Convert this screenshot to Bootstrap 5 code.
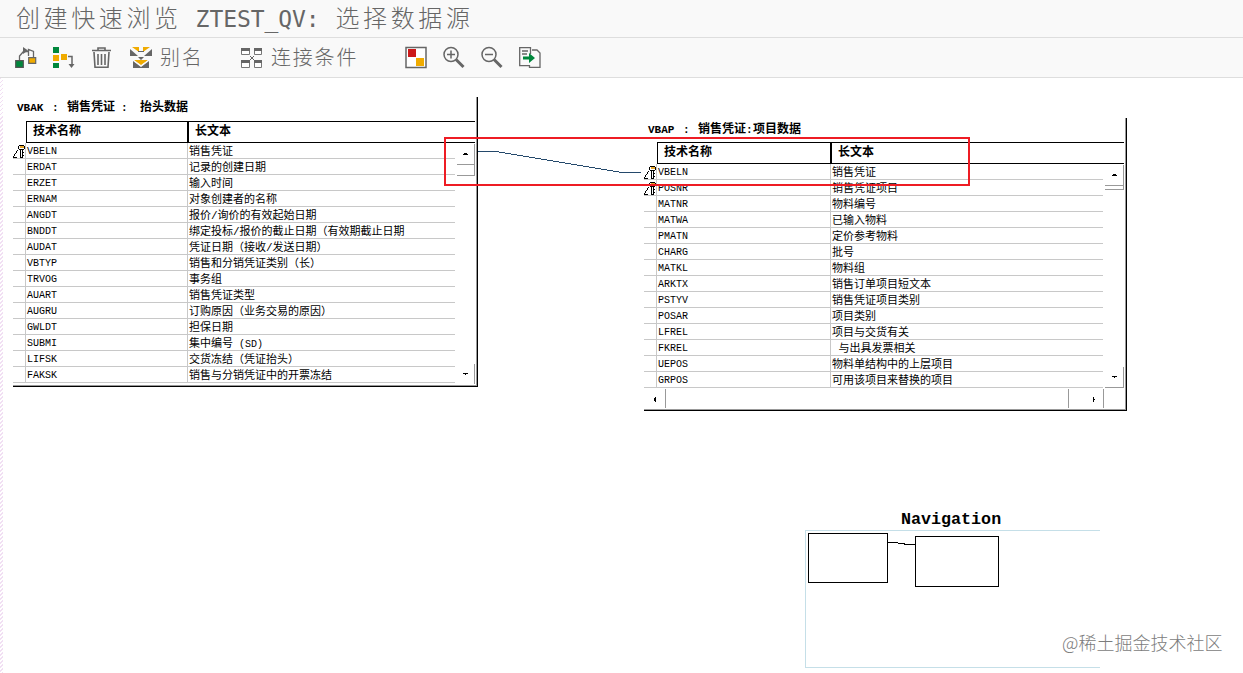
<!DOCTYPE html>
<html lang="zh-CN">
<head>
<meta charset="utf-8">
<title>创建快速浏览 ZTEST_QV</title>
<link href="https://cdn.jsdelivr.net/npm/bootstrap@5.3.0/dist/css/bootstrap.min.css" rel="stylesheet">
<script src="https://cdn.jsdelivr.net/npm/bootstrap@5.3.0/dist/js/bootstrap.bundle.min.js"></script>
<style>
body{height:673px;overflow:hidden;background:#fff;color:#000;font-family:"Liberation Mono","Noto Sans CJK SC",monospace}
.titlebar{height:38px;background:#f9f9f9;border-bottom:1px solid #dedede;color:#666;padding-left:16px;font:300 24px/34px "Noto Sans CJK SC",sans-serif;letter-spacing:3.6px;white-space:pre}
.titlebar .code{font:23px/34px "DejaVu Sans Mono",monospace;letter-spacing:-.08px;margin:0 16px 0 14px}
.tools{height:40px;background:#f9f9f9;border-bottom:1px solid #dedede;color:#666;font:300 20px/36px "Noto Sans CJK SC",sans-serif;letter-spacing:1.8px;padding-left:14px}
.tools span{height:38px}
.tools svg{width:24px;height:24px;display:block;flex:none}
.board{height:595px}
.board::before{content:"";position:absolute;left:0;top:0;width:3px;height:100%;background:repeating-linear-gradient(135deg,#f1dff3 0 1.4px,#fff 1.4px 2.83px)}
.node{position:absolute;border-right:1px solid #000;border-bottom:1px solid #000;box-shadow:inset -1px -1px #999}
.node-vbak{left:13px;top:19px;width:465px;height:290px}
.node-vbap{left:644px;top:40px;width:483px;height:293px}
.cap{height:24px;padding-top:2px;font-size:11px;font-weight:700;line-height:18px;white-space:pre;padding-left:4px}
.node-vbap .cap{padding-top:3px}
.cap span{display:inline-block}
.head{height:22px;margin:0 2px 0 13px;border:1px solid #000;border-right:0;font-size:12px;font-weight:700;line-height:21px}
.head div{padding-left:6px;height:20px}
.head div+div{border-left:2px solid #000}
.ln{height:16px;border-bottom:1px solid #c8c8c8;font-size:11px;line-height:18px;white-space:pre}
.ln b{width:13px;border-right:1px solid #c8c8c8}
.ln i{font-style:normal;font-size:10px;padding-left:1px;border-right:1px solid #c8c8c8}
.ln span{padding-left:1px}
.node-vbak .rows{width:442px}
.node-vbap .rows{width:459px}
.node-vbak i{width:162px}.node-vbap i{width:174px}
.node-vbak .head div:first-child{width:160px}.node-vbap .head div:first-child{width:172px}
.over{position:absolute;left:0;top:0}
.mark-box{position:absolute;left:444px;top:59px;width:526px;height:49px;border:2px solid #ee1c24}
.navi{position:absolute;left:805px;top:431px;width:295px}
.navi h6{font:700 16.7px/21px "Liberation Mono",monospace;margin:0;padding-left:96px}
.navi svg{display:block}
.water{position:absolute;left:1062px;top:551px;font:300 18px/26px "Noto Sans CJK SC",sans-serif;color:#7c7c7c;white-space:nowrap}
</style>
</head>
<body>
<svg width="0" height="0" class="position-absolute">
<defs>
<g id="key" shape-rendering="crispEdges"><path d="M6 0h5v1h1v3h-1v1h-1v8H7V5H6V4H5V1h1z"/><path d="M6 1h5v3H6zM8 5h1v7H8z" fill="#fff"/><path d="M7 1h4v2H7z" fill="#e9a72b"/><path d="M4 5h1v1H4zM3 6h1v2H3zM2 8h1v1H2zM1 9h1v2H1zM0 11h1v2H0zM1 12h3v1H1zM10 7h1v1h-1zM10 10h1v1h-1z"/></g>
</defs>
</svg>
<header class="titlebar">创建快速浏览<span class="code">ZTEST_QV:</span>选择数据源</header>
<nav class="tools d-flex align-items-center">
<svg viewBox="0 0 24 24"><path d="M5.500 14v-4l4-4.500h5M14.500 10V3.500l5 2V11" fill="none" stroke="#666" stroke-width="1.3"/><path d="M9 1l5 3.500L9 8z" fill="#666"/><path d="M1.700 14.700h7.600v6.600H1.700z" fill="#00873c" stroke="#555" stroke-width="1.2"/><path d="M14.700 11.700h7v5.600h-7z" fill="#f0ab00" stroke="#666" stroke-width="1.2"/></svg>
<svg viewBox="0 0 24 24" style="margin-left:14px"><path d="M1 1h6v6H1zM1 17h6v5H1z" fill="#00873c"/><path d="M1 9h6v6H1zM9 8h6v6H9z" fill="#f0ab00"/><path d="M16 10.500h4V19" fill="none" stroke="#666" stroke-width="1.5"/><path d="M16.500 18h6L19.500 22z" fill="#666"/></svg>
<svg viewBox="0 0 24 24" style="margin-left:14px"><path d="M2 4.500h19M8 4V2h7v2M4 6l1 15.300h13L19 6M8 8v11M11.500 8v11M15 8v11" fill="none" stroke="#666" stroke-width="1.6"/></svg>
<svg viewBox="0 0 24 24" style="margin-left:15px"><path d="M1 3v7h8zM23 3v7h-8zM9 11h6l-3 3zM4 15v7h16v-7l-8 6z" fill="#666"/><path d="M3 1h7v5zM14 1h7l-7 5zM5 14h14l-7 5z" fill="#f0ab00"/><path d="M9 5.500h6" stroke="#666"/><path d="M2 2l8 6M22 2l-8 6M4 14l8 6 8-6" fill="none" stroke="#f9f9f9"/></svg>
<span style="margin-left:7px;width:80px">别名</span>
<svg viewBox="0 0 24 24"><path d="M1.500 2.500h8v6h-8zM14.500 2.500h7v6h-7zM1.500 14.500h8v7h-8zM14.500 14.500h7v7h-7z" fill="#fff" stroke="#777"/><path d="M1 2h9v3H1zM14 2h8v3h-8zM1 14h9v3H1zM14 14h8v3h-8z" fill="#666"/><path d="M10 10l4 4M14 10l-4 4" stroke="#666"/></svg>
<span style="margin-left:7px;width:133px">连接条件</span>
<svg viewBox="0 0 24 24"><path d="M2 1.500h20v20H2z" fill="#fff" stroke="#666" stroke-width="1.5"/><path d="M4 3h8v8H4z" fill="#cc1919"/><path d="M12 12h8v8h-8z" fill="#f0ab00"/></svg>
<svg viewBox="0 0 24 24" style="margin-left:14px"><circle cx="9" cy="8.500" r="7" fill="none" stroke="#666" stroke-width="1.5"/><path d="M5 8.500h8M9 4.500v8" stroke="#666" stroke-width="1.5"/><path d="M14 13.500l7.500 7.500" stroke="#666" stroke-width="3"/></svg>
<svg viewBox="0 0 24 24" style="margin-left:14px"><circle cx="9" cy="8.500" r="7" fill="none" stroke="#666" stroke-width="1.5"/><path d="M5 8.500h8" stroke="#666" stroke-width="1.5"/><path d="M14 13.500l7.500 7.500" stroke="#666" stroke-width="3"/></svg>
<svg viewBox="0 0 24 24" style="margin-left:14px"><path d="M12.500 8V1.700H1.700v18H11M4 5h6M4 8h5M14 4h5l3 3v14.300H11.500V19" fill="none" stroke="#666" stroke-width="1.3"/><path d="M5 10.500h6V7l6 5-6 5v-3.500H5z" fill="#00873c"/></svg>
</nav>
<main class="board position-relative">
<section class="node node-vbak">
<div class="cap"><span style="width:35px">VBAK</span><span style="width:15px">:</span><span style="width:54px;font-size:12px">销售凭证</span><span style="width:19px">:</span><span style="font-size:12px">抬头数据</span></div>
<div class="head d-flex"><div>技术名称</div><div>长文本</div></div>
<div class="rows">
<div class="ln d-flex"><b></b><i>VBELN</i><span>销售凭证</span></div>
<div class="ln d-flex"><b></b><i>ERDAT</i><span>记录的创建日期</span></div>
<div class="ln d-flex"><b></b><i>ERZET</i><span>输入时间</span></div>
<div class="ln d-flex"><b></b><i>ERNAM</i><span>对象创建者的名称</span></div>
<div class="ln d-flex"><b></b><i>ANGDT</i><span>报价/询价的有效起始日期</span></div>
<div class="ln d-flex"><b></b><i>BNDDT</i><span>绑定投标/报价的截止日期（有效期截止日期</span></div>
<div class="ln d-flex"><b></b><i>AUDAT</i><span>凭证日期（接收/发送日期）</span></div>
<div class="ln d-flex"><b></b><i>VBTYP</i><span>销售和分销凭证类别（长）</span></div>
<div class="ln d-flex"><b></b><i>TRVOG</i><span>事务组</span></div>
<div class="ln d-flex"><b></b><i>AUART</i><span>销售凭证类型</span></div>
<div class="ln d-flex"><b></b><i>AUGRU</i><span>订购原因（业务交易的原因）</span></div>
<div class="ln d-flex"><b></b><i>GWLDT</i><span>担保日期</span></div>
<div class="ln d-flex"><b></b><i>SUBMI</i><span>集中编号<small style="font-size:10px"> (SD)</small></span></div>
<div class="ln d-flex"><b></b><i>LIFSK</i><span>交货冻结（凭证抬头）</span></div>
<div class="ln d-flex"><b></b><i>FAKSK</i><span>销售与分销凭证中的开票冻结</span></div>
</div>
</section>
<section class="node node-vbap">
<div class="cap"><span style="width:35px">VBAP</span><span style="width:15px">:</span><span style="font-size:12px">销售凭证</span><span style="width:7px">:</span><span style="font-size:12px">项目数据</span></div>
<div class="head d-flex"><div>技术名称</div><div>长文本</div></div>
<div class="rows">
<div class="ln d-flex"><b></b><i>VBELN</i><span>销售凭证</span></div>
<div class="ln d-flex"><b></b><i>POSNR</i><span>销售凭证项目</span></div>
<div class="ln d-flex"><b></b><i>MATNR</i><span>物料编号</span></div>
<div class="ln d-flex"><b></b><i>MATWA</i><span>已输入物料</span></div>
<div class="ln d-flex"><b></b><i>PMATN</i><span>定价参考物料</span></div>
<div class="ln d-flex"><b></b><i>CHARG</i><span>批号</span></div>
<div class="ln d-flex"><b></b><i>MATKL</i><span>物料组</span></div>
<div class="ln d-flex"><b></b><i>ARKTX</i><span>销售订单项目短文本</span></div>
<div class="ln d-flex"><b></b><i>PSTYV</i><span>销售凭证项目类别</span></div>
<div class="ln d-flex"><b></b><i>POSAR</i><span>项目类别</span></div>
<div class="ln d-flex"><b></b><i>LFREL</i><span>项目与交货有关</span></div>
<div class="ln d-flex"><b></b><i>FKREL</i><span> 与出具发票相关</span></div>
<div class="ln d-flex"><b></b><i>UEPOS</i><span>物料单结构中的上层项目</span></div>
<div class="ln d-flex"><b></b><i>GRPOS</i><span>可用该项目来替换的项目</span></div>
</div>
</section>
<!-- join line, key markers and scroll bar parts -->
<svg class="over" width="1243" height="595" viewBox="0 78 1243 595" shape-rendering="crispEdges">
<path d="M478 151.500h18L622 172.500h19" fill="none" stroke="#24496b"/>
<use href="#key" x="13" y="145"/><use href="#key" x="644" y="166"/><use href="#key" x="644" y="182"/>
<path d="M474.500 144v32M457 164.500h17M457 175.500h17M474.500 364v20M1123.500 165v25M1105 185.500h18M1105 189.500h18M1123.500 367v21M1105 387.500h18M665.500 389v19M1068.500 389v19M1103.500 389v19" fill="none" stroke="#999"/>
<path d="M464 153h3v1h1v1h-5v-1h1zM1113 174h3v1h1v1h-5v-1h1zM463 373h5v1h-2v1h-1v-1h-2zM1112 376h5v1h-2v1h-1v-1h-2zM654 398h1v-1h1v5h-1v-1h-1zM1093 397h1v2h1v1h-1v2h-1z"/>
</svg>
<div class="mark-box"></div>
<section class="navi">
<h6>Navigation</h6>
<svg width="295" height="138" viewBox="0 0 295 138" shape-rendering="crispEdges" fill="none"><path d="M295 .5H.5v137H295" stroke="#c5dfe8"/><path d="M3.500 3.500h79v49h-79zM110.500 6.500h83v50h-83zM83 12.500h6l14 2h7" stroke="#000"/></svg>
</section>
<div class="water">@稀土掘金技术社区</div>
</main>
</body>
</html>
